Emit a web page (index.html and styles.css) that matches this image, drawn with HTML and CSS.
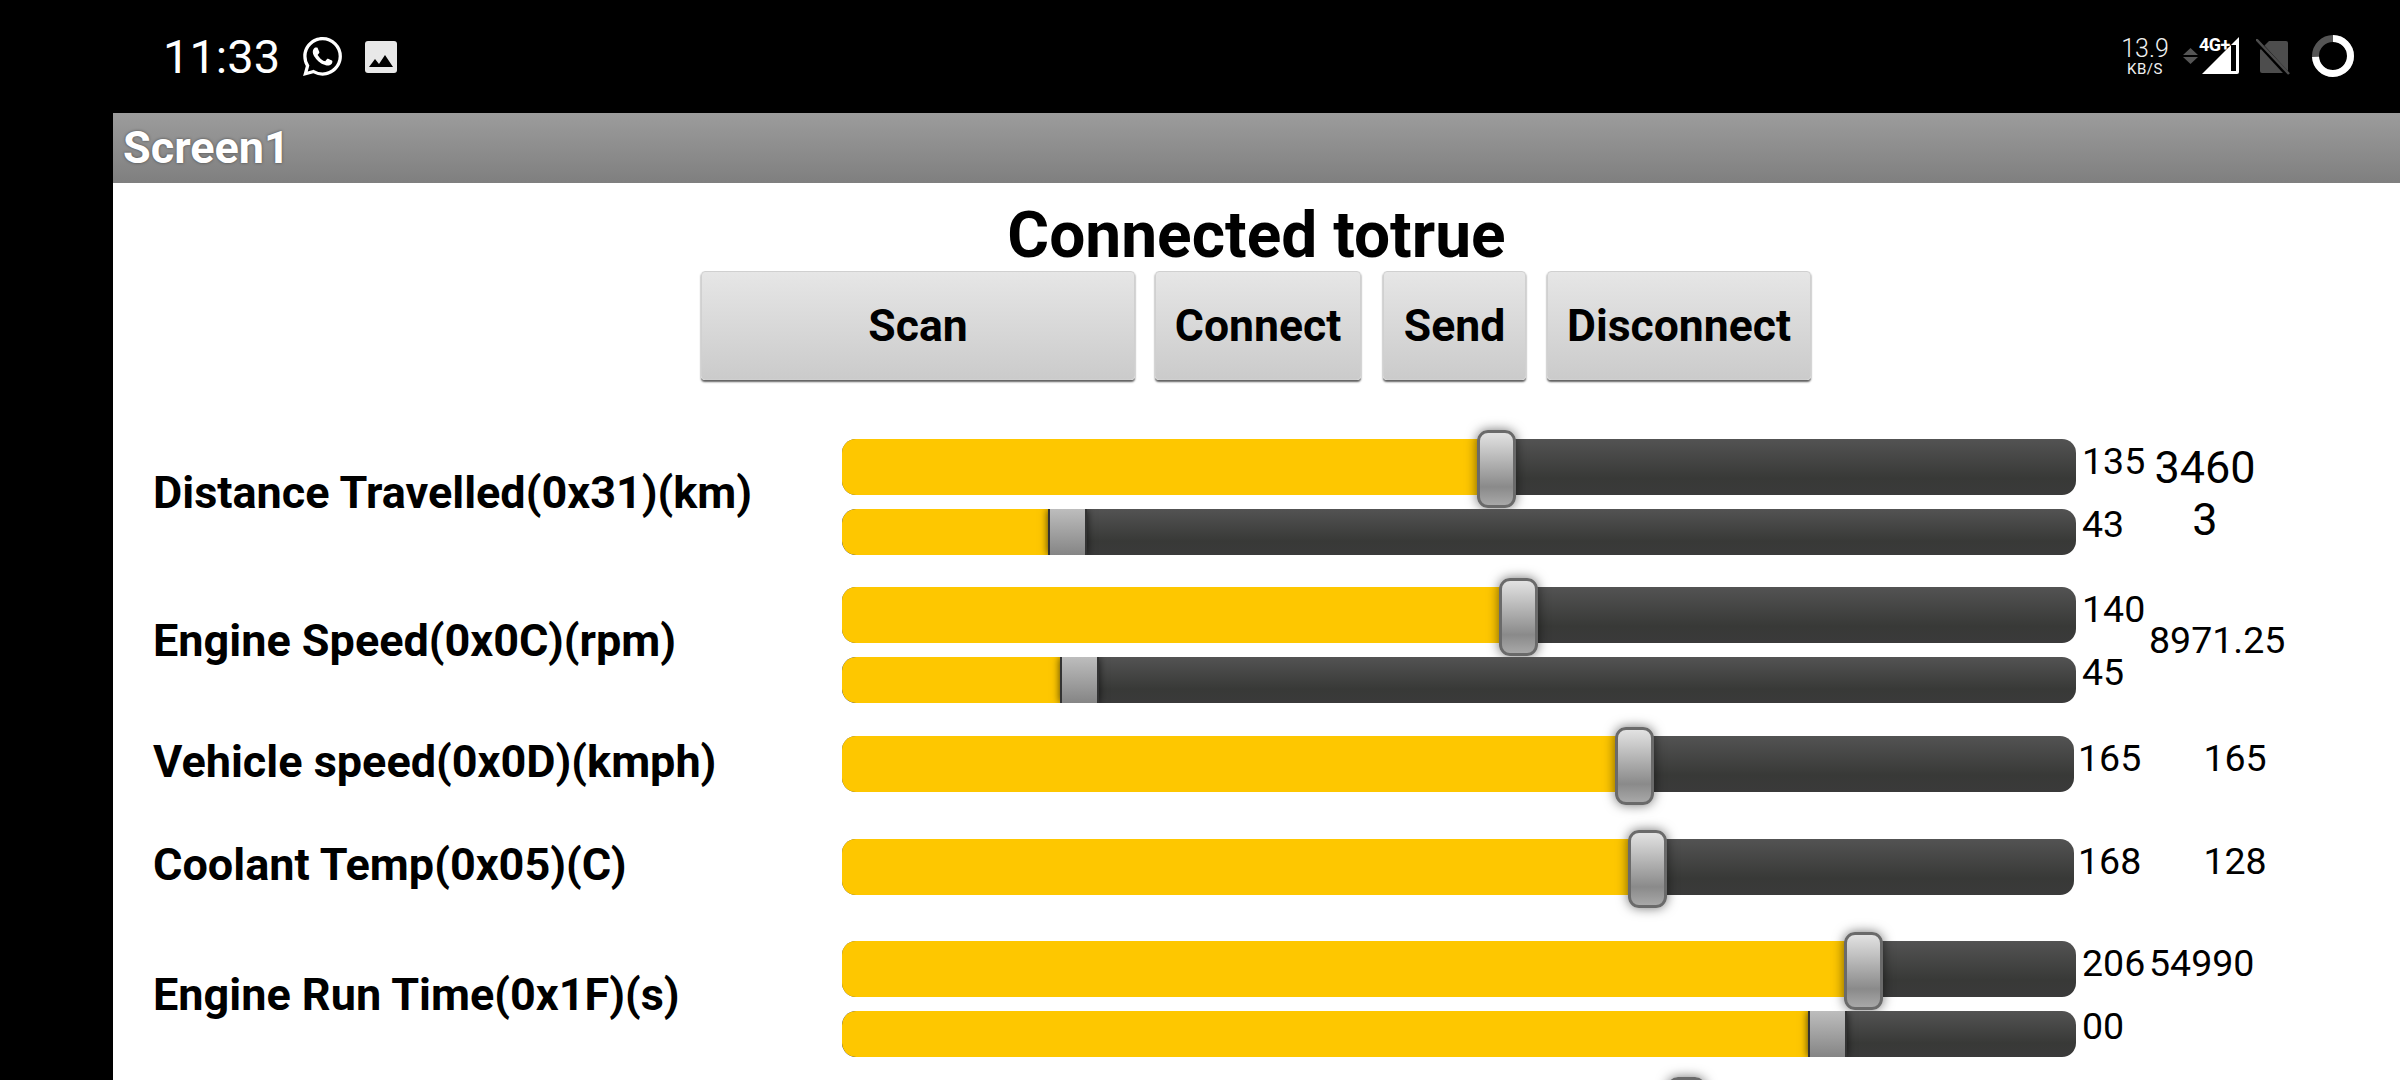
FILE: index.html
```html
<!DOCTYPE html>
<html lang="en">
<head>
    <meta charset="UTF-8">
    <title>Screen1</title>
    <link rel="stylesheet" href="styles.css">
</head>
<body>
    <div class="status-bar">
        <div class="status-left">
            <span class="clock">11:33</span>
            <svg class="icon-whatsapp" viewBox="0 0 24 24"><path fill="#fff" d="M17.472 14.382c-.297-.149-1.758-.867-2.03-.967-.273-.099-.471-.148-.67.15-.197.297-.767.966-.94 1.164-.173.199-.347.223-.644.075-.297-.15-1.255-.463-2.39-1.475-.883-.788-1.48-1.761-1.653-2.059-.173-.297-.018-.458.13-.606.134-.133.298-.347.446-.52.149-.174.198-.298.298-.497.099-.198.05-.371-.025-.52-.075-.149-.669-1.612-.916-2.207-.242-.579-.487-.5-.669-.51-.173-.008-.371-.01-.57-.01-.198 0-.52.074-.792.372-.272.297-1.04 1.016-1.04 2.479 0 1.462 1.065 2.875 1.213 3.074.149.198 2.096 3.2 5.077 4.487.709.306 1.262.489 1.694.625.712.227 1.36.195 1.871.118.571-.085 1.758-.719 2.006-1.413.248-.694.248-1.289.173-1.413-.074-.124-.272-.198-.57-.347m-5.421 7.403h-.004a9.87 9.87 0 01-5.031-1.378l-.361-.214-3.741.982.998-3.648-.235-.374a9.86 9.86 0 01-1.51-5.26c.001-5.45 4.436-9.884 9.888-9.884 2.64 0 5.122 1.03 6.988 2.898a9.825 9.825 0 012.893 6.994c-.003 5.45-4.437 9.884-9.885 9.884m8.413-18.297A11.815 11.815 0 0012.05 0C5.495 0 .16 5.335.157 11.892c0 2.096.547 4.142 1.588 5.945L.057 24l6.305-1.654a11.882 11.882 0 005.683 1.448h.005c6.554 0 11.89-5.335 11.893-11.893a11.821 11.821 0 00-3.48-8.413Z"/></svg>
            <svg class="icon-image" viewBox="0 0 32 32"><rect width="32" height="32" rx="3" fill="#e8e8e8"/><path fill="#000" d="M4 26l6-8 4 5 6-9 8 12z"/></svg>
        </div>
        <div class="status-right">
            <div class="net-speed">
                <span class="net-num">13.9</span>
                <span class="net-unit">KB/S</span>
            </div>
            <svg class="icon-arrows" viewBox="0 0 15 16"><path fill="#555" d="M7.5 0L15 7H0zM0 9h15l-7.500 7z"/></svg>
            <div class="signal">
                <svg class="icon-signal" viewBox="0 0 37 37"><path fill="#fff" d="M37 0v35a2 2 0 0 1-2 2H0z"/><rect x="29" y="8" width="5" height="26" fill="#000"/></svg>
                <span class="signal-type">4G+</span>
            </div>
            <svg class="icon-sim" viewBox="0 0 34 36"><path fill="#4d4d4d" d="M13 2h17a2 2 0 0 1 2 2v28a2 2 0 0 1-2 2H6a2 2 0 0 1-2-2V11z"/><path stroke="#000" stroke-width="5" d="M-2 -1L34 38"/><path stroke="#4d4d4d" stroke-width="2.500" d="M0 0L33 35"/></svg>
            <svg class="icon-battery" viewBox="0 0 42 42"><circle cx="21" cy="21" r="17.500" fill="none" stroke="#555" stroke-width="7"/><circle cx="21" cy="21" r="17.500" fill="none" stroke="#fff" stroke-width="7" stroke-dasharray="81 110" transform="rotate(-90 21 21)"/></svg>
        </div>
    </div>

    <div class="main">
        <div class="side-strip"></div>
        <div class="app">
            <div class="app-bar">Screen1</div>
            <h1 class="title">Connected totrue</h1>
            <div class="button-row">
                <button class="btn btn-scan">Scan</button>
                <button class="btn btn-connect">Connect</button>
                <button class="btn btn-send">Send</button>
                <button class="btn btn-disconnect">Disconnect</button>
            </div>

            <div class="sensor-row row-first">
                <div class="label">Distance Travelled(0x31)(km)</div>
                <div class="sliders">
                    <div class="slider-line">
                        <div class="slider"><div class="fill" style="width:655px"><span class="thumb"></span></div></div>
                        <span class="value">135</span>
                    </div>
                    <div class="slider-line">
                        <div class="slider slider-thin"><div class="fill" style="width:226px"><span class="thumb"></span></div></div>
                        <span class="value value-thin">43</span>
                    </div>
                </div>
                <div class="result result-big">34603</div>
            </div>

            <div class="sensor-row">
                <div class="label">Engine Speed(0x0C)(rpm)</div>
                <div class="sliders">
                    <div class="slider-line">
                        <div class="slider"><div class="fill" style="width:677px"><span class="thumb"></span></div></div>
                        <span class="value">140</span>
                    </div>
                    <div class="slider-line">
                        <div class="slider slider-thin"><div class="fill" style="width:238px"><span class="thumb"></span></div></div>
                        <span class="value value-thin">45</span>
                    </div>
                </div>
                <div class="result">8971.25</div>
            </div>

            <div class="sensor-row row-vehicle">
                <div class="label label-single">Vehicle speed(0x0D)(kmph)</div>
                <div class="sliders">
                    <div class="slider-line">
                        <div class="slider slider-narrow"><div class="fill" style="width:793px"><span class="thumb"></span></div></div>
                        <span class="value value-narrow">165</span>
                    </div>
                </div>
                <div class="result result-top result-center">165</div>
            </div>

            <div class="sensor-row row-coolant">
                <div class="label label-single">Coolant Temp(0x05)(C)</div>
                <div class="sliders">
                    <div class="slider-line">
                        <div class="slider slider-narrow"><div class="fill" style="width:806px"><span class="thumb"></span></div></div>
                        <span class="value value-narrow">168</span>
                    </div>
                </div>
                <div class="result result-top result-center">128</div>
            </div>

            <div class="sensor-row row-runtime">
                <div class="label">Engine Run Time(0x1F)(s)</div>
                <div class="sliders">
                    <div class="slider-line">
                        <div class="slider"><div class="fill" style="width:1022px"><span class="thumb"></span></div></div>
                        <span class="value">206</span>
                    </div>
                    <div class="slider-line">
                        <div class="slider slider-thin"><div class="fill" style="width:986px"><span class="thumb"></span></div></div>
                        <span class="value value-thin">00</span>
                    </div>
                </div>
                <div class="result result-top">54990</div>
            </div>

            <div class="sensor-row row-last">
                <div class="label"></div>
                <div class="sliders">
                    <div class="slider-line">
                        <div class="slider"><div class="fill" style="width:845px"><span class="thumb"></span></div></div>
                    </div>
                </div>
            </div>
        </div>
    </div>
</body>
</html>
```

FILE: styles.css
```css
* {
    box-sizing: border-box;
}
html, body {
    margin: 0;
    height: 1080px;
    overflow: hidden;
}
body {
    background-color: #000;
    font-family: Roboto, "Liberation Sans", sans-serif;
    color: #000;
}

/* status bar */
.status-bar {
    height: 113px;
    background-color: #000;
    color: #fff;
    display: flex;
    justify-content: space-between;
    padding: 0 46px 0 163px;
}
.status-left {
    display: flex;
    align-items: center;
    height: 113px;
}
.clock {
    font-size: 47px;
    line-height: 113px;
    width: 140px;
}
.icon-whatsapp {
    width: 39px;
    height: 39px;
    margin-right: 23px;
}
.icon-image {
    width: 32px;
    height: 32px;
}
.status-right {
    display: flex;
    align-items: flex-start;
}
.net-speed {
    width: 44px;
    margin: 36px 16px 0 0;
    display: flex;
    flex-direction: column;
    align-items: center;
    color: #f0f0f0;
}
.net-num {
    font-size: 25px;
    font-weight: 300;
    line-height: 26px;
}
.net-unit {
    font-size: 15px;
    line-height: 14px;
    letter-spacing: 0.5px;
}
.icon-arrows {
    width: 15px;
    height: 16px;
    margin: 48px 4px 0 0;
}
.signal {
    position: relative;
    width: 37px;
    height: 37px;
    margin-top: 37px;
}
.icon-signal {
    width: 37px;
    height: 37px;
    display: block;
}
.signal-type {
    position: absolute;
    left: -3px;
    top: -2px;
    font-size: 18px;
    line-height: 20px;
    font-weight: 700;
    letter-spacing: -0.5px;
    color: #fff;
}
.icon-sim {
    width: 34px;
    height: 36px;
    margin: 39px 0 0 17px;
}
.icon-battery {
    width: 42px;
    height: 42px;
    margin: 35px 0 0 22px;
}

/* app */
.main {
    display: flex;
}
.side-strip {
    width: 113px;
    flex: none;
}
.app {
    flex: 1;
    height: 967px;
    background-color: #fff;
    overflow: hidden;
}
.app-bar {
    height: 70px;
    padding-left: 10px;
    background: linear-gradient(#9c9c9c, #7f7f7f);
    color: #fff;
    font-size: 45px;
    font-weight: 700;
    line-height: 70px;
    text-shadow: 0 0 3px rgba(0, 0, 0, 0.5);
}
.title {
    margin: 0;
    height: 88px;
    padding-top: 18px;
    text-align: center;
    font-size: 64px;
    font-weight: 700;
    line-height: 70px;
}
.button-row {
    display: flex;
    justify-content: center;
    height: 109px;
    padding-right: 1px;
}
.btn {
    height: 109px;
    margin: 0;
    padding: 0;
    border: 1px solid #d0d0d0;
    border-radius: 4px;
    background: linear-gradient(#e6e6e6, #cbcbcb);
    box-shadow: 0 2px 2px #5f5f5f;
    font-family: inherit;
    font-size: 44.5px;
    font-weight: 700;
    color: #000;
}
.btn-scan {
    width: 434px;
}
.btn-connect {
    width: 206px;
    margin-left: 20px;
}
.btn-send {
    width: 143px;
    margin-left: 22px;
}
.btn-disconnect {
    width: 264px;
    margin-left: 21px;
}

/* sensor rows */
.sensor-row {
    display: flex;
    align-items: center;
    margin-top: 32px;
}
.row-first {
    margin-top: 59px;
}
.row-vehicle {
    margin-top: 33px;
}
.row-coolant {
    margin-top: 47px;
}
.row-runtime {
    margin-top: 46px;
}
.row-last {
    margin-top: 29px;
}
.label {
    width: 729px;
    flex: none;
    padding: 0 0 9px 40px;
    font-size: 45px;
    font-weight: 700;
    line-height: 48px;
}
.label-single {
    padding-bottom: 5px;
}
.sliders {
    display: flex;
    flex-direction: column;
    gap: 14px;
    flex: none;
}
.slider-line {
    display: flex;
    align-items: flex-start;
}
.slider {
    position: relative;
    width: 1234px;
    height: 56px;
    flex: none;
    border-radius: 14px;
    background: linear-gradient(#535353, #383937 70%, #3a3a3a);
}
.slider-narrow {
    width: 1232px;
}
.fill {
    position: relative;
    height: 100%;
    background-color: #fec700;
    border-radius: 14px 0 0 14px;
}
.thumb {
    position: absolute;
    right: -19px;
    top: -9px;
    width: 39px;
    height: 78px;
    border: 3px solid #6a6a6a;
    border-radius: 11px;
    background: linear-gradient(#e2e2e2, #8a8a8a 75%, #a8a8a8);
    box-shadow: 0 0 12px rgba(0, 0, 0, 0.55);
}
.slider-thin {
    height: 46px;
    overflow: hidden;
}
.slider-thin .thumb {
    top: 0;
    height: 46px;
    border-width: 0 2px;
    border-color: #333;
    border-radius: 0;
    background: linear-gradient(#bdbdbd, #858585);
    box-shadow: 0 0 8px rgba(0, 0, 0, 0.7);
}
.value {
    width: 67px;
    margin-left: 6px;
    flex: none;
    font-size: 37.5px;
    line-height: 44px;
}
.value-thin {
    line-height: 30px;
}
.value-narrow {
    width: 71px;
    margin-left: 4px;
}
.result {
    font-size: 37.5px;
    line-height: 50px;
    margin-bottom: 10px;
}
.result-big {
    width: 112px;
    margin-bottom: 6px;
    font-size: 45px;
    line-height: 52px;
    text-align: center;
    word-break: break-all;
}
.result-top {
    align-self: flex-start;
    line-height: 44px;
}
.result-center {
    width: 172px;
    text-align: center;
}
```
